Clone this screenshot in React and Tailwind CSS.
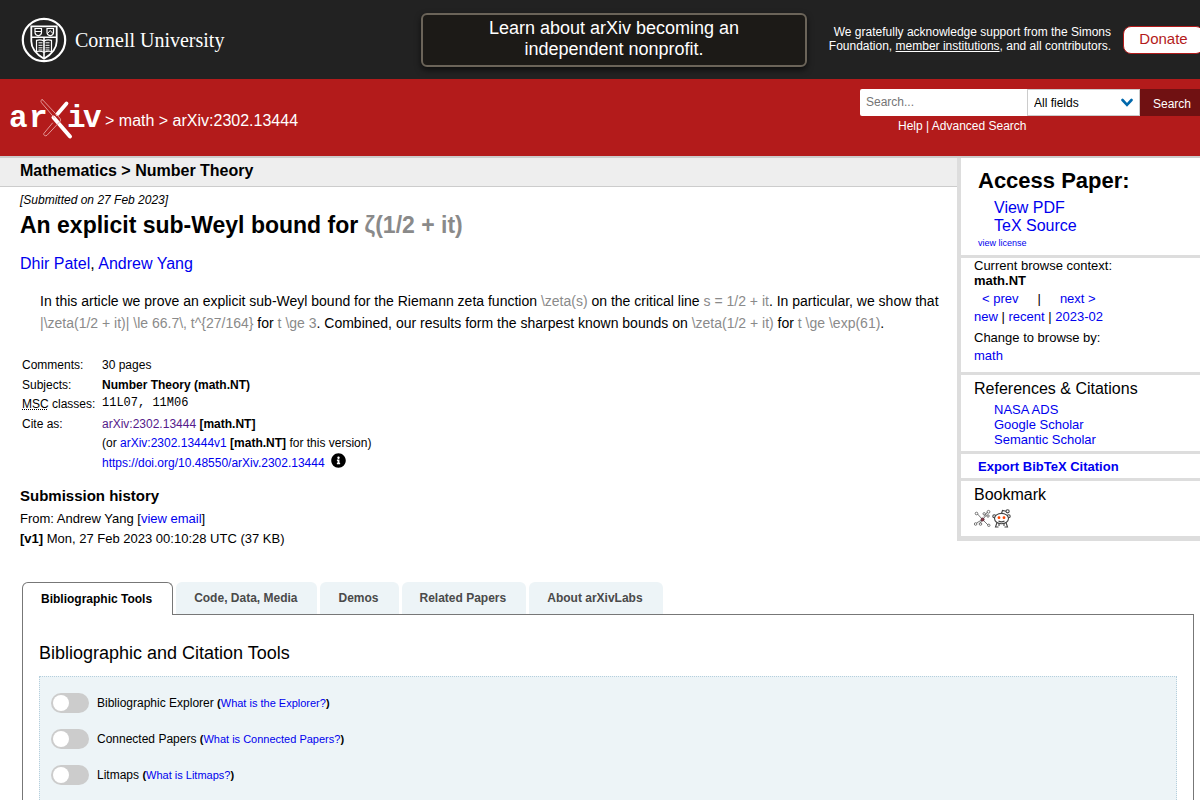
import React, { useState } from 'react';
import clsx from 'clsx';
import { FaInfoCircle } from 'react-icons/fa';

const tabs = ['Bibliographic Tools', 'Code, Data, Media', 'Demos', 'Related Papers', 'About arXivLabs'];

const tools = [
    { id: 'bibex', name: 'Bibliographic Explorer', help: 'What is the Explorer?' },
    { id: 'connected', name: 'Connected Papers', help: 'What is Connected Papers?' },
    { id: 'litmaps', name: 'Litmaps', help: 'What is Litmaps?' },
];

const Link = ({ children, className }) => (
    <a href="#" className={clsx('hover:underline', className || 'text-[#0000ee]')}>{children}</a>
);

const Tex = ({ children }) => <span className="text-[#8a8a8a]">{children}</span>;

const CornellSeal = () => (
    <svg width="46" height="46" viewBox="0 0 46 46" fill="none" stroke="#fff" aria-hidden="true">
        <circle cx="23" cy="23" r="21.2" strokeWidth="2.2" />
        <path d="M10.3 9.3h25.4v15c0 7.5-5 13-12.7 17.5C15.3 37.3 10.3 31.8 10.3 24.3z" strokeWidth="1.8" />
        <path d="M10.3 20.2h25.4M23 20.2v21" strokeWidth="1.6" />
        <path d="M14 11.5h6.5v4c0 1.8-1.2 2.8-3.2 3.4-2-.6-3.3-1.6-3.3-3.4zM26 11.5h6.5v4c0 1.8-1.2 2.8-3.2 3.4-2-.6-3.3-1.6-3.3-3.4z" strokeWidth="1.2" />
        <path d="M14 14.5h6.5M26.5 16.5l2.7-3 2.7 3" strokeWidth="1" />
        <path d="M15.5 23.3c3-.7 5.5-.4 7.5.8 2-1.2 4.5-1.5 7.5-.8v11.2c-3-.5-5.5-.2-7.5.8-2-1-4.5-1.3-7.5-.8z" strokeWidth="1.2" />
        <path d="M17.5 25.8h4M17.5 28.3h4M17.5 30.8h4M24.5 25.8h4M24.5 28.3h4M24.5 30.8h4M17.5 33h4M24.5 33h4" strokeWidth="1" />
    </svg>
);

const ArxivLogo = () => (
    <svg width="92" height="42" viewBox="0 0 92 42" aria-label="arXiv logo">
        <g fill="#fff" fontFamily="'Liberation Mono', monospace" fontSize="31" fontWeight="700">
            <text x="0 20" y="29">ar</text>
            <text x="58 74" y="29">iv</text>
        </g>
        <g strokeLinecap="round" fill="none">
            <path d="M57.5 5.5 L48.5 16" stroke="#fff" strokeWidth="3.8" />
            <path d="M44.5 19.5 L61 38.5" stroke="#fff" strokeWidth="4" />
            <path d="M33.500 1.700 C32 1.300 31.300 3 32.500 4.700 L45.500 20 M33.500 1.700 L51 20.300 Q52.300 22 51 23.500 L38 37.300 C36.500 38.500 34.300 37.500 34.800 35.500 L43.500 25" stroke="#e8a5a5" strokeWidth="0.9" />
        </g>
    </svg>
);

const BibsonomyIcon = () => (
    <svg width="17" height="18" viewBox="0 0 17 18" fill="none" stroke="#666" strokeWidth="0.9" aria-hidden="true">
        <path d="M8.5 10.5 3.5 5M8.5 10.5 13 5.5M8.5 10.5 2.5 14M8.5 10.5 6 14.5M8.5 10.5 14 16M10 7.5 13.5 3" />
        <circle cx="2.5" cy="4.5" r="1.3" />
        <circle cx="10.2" cy="4.8" r="1.2" />
        <circle cx="14.5" cy="2.8" r="1.4" />
        <circle cx="14" cy="7" r="1.2" />
        <circle cx="1.6" cy="15" r="1.3" />
        <circle cx="6.5" cy="15" r="1.3" />
        <circle cx="14.8" cy="16.3" r="1.2" />
        <circle cx="8.6" cy="10.5" r="1.5" fill="#8b3a4a" stroke="#5c2a35" />
    </svg>
);

const RedditIcon = () => (
    <svg width="19" height="19" viewBox="0 0 19 19" fill="none" stroke="#444" strokeWidth="1.1" aria-hidden="true">
        <path d="M9.5 4.5 10.5 1.5 14 2.2" />
        <circle cx="15.6" cy="2.3" r="1.6" />
        <circle cx="2.3" cy="7.2" r="1.5" />
        <circle cx="16.7" cy="7.2" r="1.5" />
        <path d="M5 13.5 3.5 18h3M14 13.5l1.5 4.5h-3M7 14.8V17M12 14.8V17" />
        <ellipse cx="9.5" cy="9.6" rx="7" ry="5.2" fill="#fff" />
        <circle cx="7" cy="8.7" r="1.4" fill="#ff4500" stroke="none" />
        <circle cx="12" cy="8.7" r="1.4" fill="#ff4500" stroke="none" />
        <path d="M6.5 12c2 1.2 4 1.2 6 0" />
    </svg>
);

const TopBar = () => (
    <div className="flex h-[79px] items-center overflow-hidden bg-[#222] text-white">
        <a href="#" className="flex min-w-0 flex-1 items-center gap-2 pl-[21px]">
            <CornellSeal />
            <span className="whitespace-nowrap font-['Liberation_Serif',serif] text-[20px] leading-6">Cornell University</span>
        </a>
        <a href="#" className="w-[386px] shrink-0 rounded-md border-2 border-[#6b6459] bg-[#1c1a17] px-12 pt-[3px] pb-[5px] text-center text-[18px] leading-[21px] shadow-[0_3px_6px_rgba(0,0,0,0.6)]">
            Learn about arXiv becoming an independent nonprofit.
        </a>
        <div className="-mr-1 flex w-[397px] shrink-0 items-center justify-end gap-3">
            <p className="w-[290px] pb-[2px] text-right text-xs leading-[14px]">
                We gratefully acknowledge support from the Simons Foundation,{' '}
                <Link className="underline">member institutions</Link>, and all contributors.
            </p>
            <a href="#" className="w-[81px] rounded-lg border border-[#b31b1b] bg-white pt-[1px] pb-[3px] text-center text-[15px] leading-[22px] text-[#b31b1b]">
                Donate
            </a>
        </div>
    </div>
);

const SearchBar = () => (
    <div className="flex h-[79px] items-start justify-between overflow-hidden border-b-2 border-[#ccc] bg-[#b31b1b] text-white">
        <div className="flex items-center gap-1 pt-[19px] pl-[9px]">
            <a href="#"><ArxivLogo /></a>
            <span className="pt-1 text-base">&gt; <Link className="text-white">math</Link> &gt; arXiv:2302.13444</span>
        </div>
        <form className="-mr-1 w-[344px] pt-[10px]" onSubmit={(e) => e.preventDefault()}>
            <div className="flex h-[27px]">
                <input
                    type="text"
                    aria-label="Search term or terms"
                    placeholder="Search..."
                    className="w-[167px] rounded-l-xs bg-white px-[6px] pb-[2px] text-xs text-black placeholder:text-[#757575]"
                />
                <div className="relative w-[113px]">
                    <select
                        aria-label="Field to search"
                        className="block h-full w-full appearance-none border border-[#ccc] bg-white px-[6px] text-xs text-black"
                    >
                        <option>All fields</option>
                        <option>Title</option>
                        <option>Author</option>
                    </select>
                    <svg className="pointer-events-none absolute top-[9px] right-[7px]" width="12" height="10" viewBox="0 0 12 10" fill="none" aria-hidden="true">
                        <path d="M1.5 2 6 6.8 10.5 2" stroke="#0068ac" strokeWidth="2.6" strokeLinecap="round" />
                    </svg>
                </div>
                <button type="submit" className="flex-1 bg-[#701112] pt-[2px] text-xs">Search</button>
            </div>
            <p className="mt-[2px] pl-[38px] text-xs leading-4">
                <Link className="text-white">Help</Link> | <Link className="text-white">Advanced Search</Link>
            </p>
        </form>
    </div>
);

const Paper = () => (
    <div className="min-w-0 flex-1">
        <h1 className="h-[29px] border-b border-[#ccc] bg-[#eee] pl-5 text-base leading-[25px] font-bold">Mathematics &gt; Number Theory</h1>
        <div className="pl-5">
            <p className="mt-[5px] text-xs leading-4 italic">[Submitted on 27 Feb 2023]</p>
            <h2 className="mt-[3px] text-[23px] leading-7 font-bold">
                An explicit sub-Weyl bound for <Tex>ζ(1/2 + it)</Tex>
            </h2>
            <p className="mt-[15px] text-base leading-5"><Link>Dhir Patel</Link>, <Link>Andrew Yang</Link></p>
            <blockquote className="mt-4 pr-2 pl-5 text-sm leading-[22px]">
                In this article we prove an explicit sub-Weyl bound for the Riemann zeta function <Tex>\zeta(s)</Tex> on
                the critical line <Tex>s = 1/2 + it</Tex>. In particular, we show that{' '}
                <Tex>|\zeta(1/2 + it)| \le 66.7\, t^{'{27/164}'}</Tex> for <Tex>t \ge 3</Tex>. Combined, our results form
                the sharpest known bounds on <Tex>\zeta(1/2 + it)</Tex> for <Tex>t \ge \exp(61)</Tex>.
            </blockquote>
            <table className="mt-[21px] ml-[2px] text-xs">
                <tbody className="align-top leading-5">
                    <tr><td className="w-20">Comments:</td><td>30 pages</td></tr>
                    <tr><td>Subjects:</td><td className="font-bold">Number Theory (math.NT)</td></tr>
                    <tr className="leading-[19px]">
                        <td><abbr title="Mathematical Subject Classification" className="underline decoration-dotted">MSC</abbr> classes:</td>
                        <td className="font-['Liberation_Mono',monospace] leading-4">11L07, 11M06</td>
                    </tr>
                    <tr>
                        <td>Cite as:</td>
                        <td><Link className="text-[#551a8b]">arXiv:2302.13444</Link> <b>[math.NT]</b></td>
                    </tr>
                    <tr className="leading-[19px]">
                        <td />
                        <td>(or <Link>arXiv:2302.13444v1</Link> <b>[math.NT]</b> for this version)</td>
                    </tr>
                    <tr>
                        <td />
                        <td>
                            <span className="flex items-start gap-[6px]">
                                <Link>https://doi.org/10.48550/arXiv.2302.13444</Link>
                                <button type="button" aria-label="Focus to learn more"><FaInfoCircle size={15} /></button>
                            </span>
                        </td>
                    </tr>
                </tbody>
            </table>
            <h2 className="mt-[13px] text-[15px] leading-5 font-bold">Submission history</h2>
            <p className="mt-[3px] text-[13px] leading-5">
                From: Andrew Yang [<Link>view email</Link>]<br />
                <b>[v1]</b> Mon, 27 Feb 2023 00:10:28 UTC (37 KB)
            </p>
        </div>
    </div>
);

const Sidebar = () => (
    <aside className="w-[243px] shrink-0 border-b-[5px] border-l-4 border-[#ddd] text-[13px] leading-[15px]">
        <section className="h-[100px] border-b-[3px] border-[#ddd] pt-2 pl-[17px]">
            <h2 className="text-[22px] leading-[30px] font-bold">Access Paper:</h2>
            <ul className="mt-[3px] pl-4 text-base leading-[18px]">
                <li><Link>View PDF</Link></li>
                <li><Link>TeX Source</Link></li>
            </ul>
            <p className="mt-[2px] text-[9px] leading-3"><Link>view license</Link></p>
        </section>
        <section className="border-b-[3px] border-[#ddd] pb-[6px] pl-[13px]">
            <p>Current browse context:</p>
            <p className="font-bold">math.NT</p>
            <p className="flex gap-[19px] pl-2 leading-[21px]"><Link>&lt; prev</Link><span>|</span><Link>next &gt;</Link></p>
            <p><Link>new</Link> | <Link>recent</Link> | <Link>2023-02</Link></p>
            <p className="mt-[6px]">Change to browse by:</p>
            <p className="leading-[21px]"><Link>math</Link></p>
        </section>
        <section className="border-b-[3px] border-[#ddd] pt-1 pb-1 pl-[13px]">
            <h3 className="text-base leading-5">References &amp; Citations</h3>
            <ul className="mt-[3px] pl-5">
                <li><Link>NASA ADS</Link></li>
                <li><Link>Google Scholar</Link></li>
                <li><Link>Semantic Scholar</Link></li>
            </ul>
        </section>
        <section className="border-b-[3px] border-[#ddd] pt-[2px] pl-[17px] leading-[22px]">
            <button type="button" className="font-bold text-[#0000ee]">Export BibTeX Citation</button>
        </section>
        <section className="pt-1 pb-2 pl-[13px]">
            <h3 className="text-base leading-5">Bookmark</h3>
            <div className="mt-1 flex gap-[1px]">
                <a href="#" aria-label="Bookmark on BibSonomy"><BibsonomyIcon /></a>
                <a href="#" aria-label="Bookmark on Reddit"><RedditIcon /></a>
            </div>
        </section>
    </aside>
);

const Labs = () => {
    const [active, setActive] = useState(0);
    const [enabled, setEnabled] = useState({});

    return (
        <div className="mt-[33px] mr-[6px] ml-[22px] flex flex-1 flex-col">
            <div role="tablist" className="flex items-start gap-[3px]">
                {tabs.map((tab, i) => (
                    <button
                        key={tab}
                        type="button"
                        role="tab"
                        aria-selected={active === i}
                        onClick={() => setActive(i)}
                        className={clsx(
                            'rounded-t-md pr-5 pl-[18px] text-xs font-bold',
                            active === i
                                ? 'relative -mb-px h-[33px] border border-b-0 border-[#777] bg-white text-black'
                                : 'h-8 bg-[#edf4f7] text-[#4a4a4a]'
                        )}
                    >
                        {tab}
                    </button>
                ))}
            </div>
            <div className="flex flex-1 flex-col border border-b-0 border-[#777] px-4 pt-[26px]">
                <h2 className="text-[18px] leading-6">Bibliographic and Citation Tools</h2>
                <div className="mt-[11px] flex flex-1 flex-col gap-4 border border-b-0 border-dotted border-[#b5cfdd] bg-[#edf4f7] px-[11px] pt-4">
                    {tools.map((tool) => (
                        <div key={tool.id} className="flex items-center gap-2 text-xs leading-5">
                            <input
                                id={tool.id}
                                type="checkbox"
                                checked={!!enabled[tool.id]}
                                onChange={(e) => setEnabled({ ...enabled, [tool.id]: e.target.checked })}
                                className="h-5 w-[38px] appearance-none rounded-full bg-[#ccc] p-[2px] before:block before:size-4 before:rounded-full before:bg-white checked:bg-[#1f5e96] checked:before:ml-[18px]"
                            />
                            <p>
                                <label htmlFor={tool.id}>{tool.name}</label>{' '}
                                <span className="text-[11px]"><b>(</b><Link>{tool.help}</Link><b>)</b></span>
                            </p>
                        </div>
                    ))}
                </div>
            </div>
        </div>
    );
};

const App = () => (
    <div className="flex min-h-screen flex-col bg-white font-['Liberation_Sans',Arial,sans-serif] text-black">
        <header>
            <TopBar />
            <SearchBar />
        </header>
        <main className="flex flex-1 flex-col">
            <div className="flex items-start">
                <Paper />
                <Sidebar />
            </div>
            <Labs />
        </main>
    </div>
);

export default App;
